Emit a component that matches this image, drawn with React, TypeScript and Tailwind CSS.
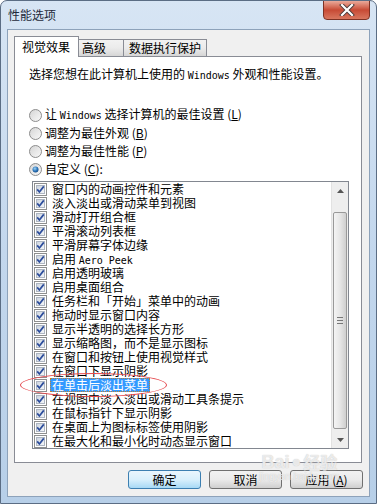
import React from 'react'

const items = [
  '窗口内的动画控件和元素',
  '淡入淡出或滑动菜单到视图',
  '滑动打开组合框',
  '平滑滚动列表框',
  '平滑屏幕字体边缘',
  '启用 |Aero Peek',
  '启用透明玻璃',
  '启用桌面组合',
  '任务栏和「开始」菜单中的动画',
  '拖动时显示窗口内容',
  '显示半透明的选择长方形',
  '显示缩略图，而不是显示图标',
  '在窗口和按钮上使用视觉样式',
  '在窗口下显示阴影',
  '在单击后淡出菜单',
  '在视图中淡入淡出或滑动工具条提示',
  '在鼠标指针下显示阴影',
  '在桌面上为图标标签使用阴影',
  '在最大化和最小化时动态显示窗口',
]

const font = "font-['Noto_Sans_CJK_SC',sans-serif]"
const mono = "font-['DejaVu_Sans_Mono',monospace] text-[10px]"

function Check() {
  return (
    <svg width="13" height="13" viewBox="0 0 13 13" className="shrink-0">
      <defs>
        <linearGradient id="cbg" x1="0" y1="0" x2="1" y2="1">
          <stop offset="0" stopColor="#cbd3de" />
          <stop offset="1" stopColor="#f6f8fa" />
        </linearGradient>
      </defs>
      <rect x="0.5" y="0.5" width="12" height="12" fill="#fff" stroke="#8e8f8f" />
      <rect x="2.5" y="2.5" width="8" height="8" fill="url(#cbg)" stroke="#aeb6c2" />
      <path d="M3.2 6.4 L5.4 9 L9.8 3.4" fill="none" stroke="#2c4d9c" strokeWidth="1.7" />
    </svg>
  )
}

function Radio({ on }: { on?: boolean }) {
  return (
    <svg width="13" height="13" viewBox="0 0 13 13" className="shrink-0">
      <defs>
        <linearGradient id="rbg" x1="0" y1="0" x2="1" y2="1">
          <stop offset="0" stopColor="#d4d4d4" />
          <stop offset="1" stopColor="#fafafa" />
        </linearGradient>
        <radialGradient id="rdot" cx="0.4" cy="0.35" r="0.7">
          <stop offset="0" stopColor="#9ed4f7" />
          <stop offset="0.6" stopColor="#2c74b8" />
          <stop offset="1" stopColor="#134a85" />
        </radialGradient>
      </defs>
      <circle cx="6.5" cy="6.5" r="6" fill="url(#rbg)" stroke="#8d8d8d" />
      {on && <circle cx="6.5" cy="6.5" r="3" fill="url(#rdot)" />}
    </svg>
  )
}

function Label({ text }: { text: string }) {
  const [a, b] = text.split('|')
  return (
    <>
      {a}
      {b && <span className={mono}>{b}</span>}
    </>
  )
}

function Btn({ label, primary }: { label: React.ReactNode; primary?: boolean }) {
  return (
    <div
      className={`w-[73px] h-[19px] rounded-[3px] border flex items-center justify-center text-[12px] leading-[14px] text-black ${
        primary
          ? 'border-[#3c7fb1] bg-gradient-to-b from-[#eaf6fd] via-[#d9f0fc] to-[#a7d9f5]'
          : 'border-[#707070] bg-gradient-to-b from-[#f2f2f2] via-[#ebebeb] to-[#cfcfcf]'
      }`}
    >
      {label}
    </div>
  )
}

export default function App() {
  return (
    <div className={`${font} relative w-[377px] h-[504px] flex flex-col border border-[#5b6d84] rounded-t-[7px] bg-gradient-to-b from-[#d7e5f4] via-[#c3d7ed] to-[#b7cfe8] overflow-hidden`}>
      {/* title bar */}
      <div className="h-[28px] flex items-start justify-between">
        <span className="ml-[7px] mt-[6px] text-[12px] leading-[16px] text-[#1e2a3a]">性能选项</span>
        <div className="mr-[6px] -mt-px w-[47px] h-[20px] rounded-b-[4px] border border-[#7d3225] bg-gradient-to-b from-[#e9a99a] via-[#c74a35] to-[#d8765f] flex items-center justify-center">
          <svg width="16" height="12" viewBox="0 0 16 12">
            <path d="M3 1 L13 11 M13 1 L3 11" stroke="#4a3a3a" strokeWidth="4" strokeLinecap="square" />
            <path d="M3 1 L13 11 M13 1 L3 11" stroke="#ffffff" strokeWidth="2.2" strokeLinecap="square" />
          </svg>
        </div>
      </div>

      {/* client area */}
      <div className="mx-[6px] mb-[6px] flex-1 border border-[#8da2ba] bg-[#f0f0f0] flex flex-col">
        {/* tabs */}
        <div className="mt-[6px] pl-[6px] h-[20px] flex items-end text-[12px] leading-[14px] text-black">
          <div className="relative z-10 w-[65px] h-[21px] -mb-px border border-b-0 border-[#898c95] bg-white pl-[7px] pt-[3px]">视觉效果</div>
          <div className="-ml-px w-[46px] h-[17px] border border-b-0 border-[#898c95] bg-gradient-to-b from-[#f2f2f2] via-[#ebebeb] to-[#d6d6d6] pl-[3px] pt-[1px]">高级</div>
          <div className="-ml-px w-[84px] h-[17px] border border-b-0 border-[#898c95] bg-gradient-to-b from-[#f2f2f2] via-[#ebebeb] to-[#d6d6d6] pl-[5px] pt-[1px]">数据执行保护</div>
        </div>

        {/* panel */}
        <div className="ml-[6px] mr-[7px] h-[407px] border border-[#898c95] bg-white pl-[14px] pt-[10px] text-[12px] leading-[14px] text-black">
          <div>
            选择您想在此计算机上使用的 <span className={mono}>Windows</span> 外观和性能设置。
          </div>

          <div className="mt-[23px] flex flex-col">
            <div className="h-[18px] flex items-center gap-[3px]">
              <Radio />
              <span>
                让 <span className={mono}>Windows</span> 选择计算机的最佳设置 (<u>L</u>)
              </span>
            </div>
            <div className="h-[18px] flex items-center gap-[3px]">
              <Radio />
              <span>调整为最佳外观 (<u>B</u>)</span>
            </div>
            <div className="h-[18px] flex items-center gap-[3px]">
              <Radio />
              <span>调整为最佳性能 (<u>P</u>)</span>
            </div>
            <div className="h-[18px] flex items-center gap-[3px]">
              <Radio on />
              <span>自定义 (<u>C</u>):</span>
            </div>
          </div>

          {/* list */}
          <div className="mt-[3px] ml-[3px] w-[317px] h-[268px] border border-[#828790] bg-white flex">
            <div className="flex-1 overflow-hidden flex flex-col">
              {items.map((t, i) => (
                <div key={i} className="h-[14px] shrink-0 flex items-center pl-[1px]">
                  <Check />
                  <span
                    className={`ml-[3px] px-[2px] h-[14px] whitespace-nowrap ${
                      i === 14 ? 'bg-[#3399ff] text-white outline outline-1 outline-dotted outline-[#c08030] -outline-offset-1' : ''
                    }`}
                  >
                    <Label text={t} />
                  </span>
                </div>
              ))}
            </div>

            {/* scrollbar */}
            <div className="w-[17px] bg-[#eeeeee] border-l border-[#e2e2e2] flex flex-col">
              <div className="h-[17px] flex items-center justify-center">
                <svg width="7" height="4" viewBox="0 0 7 4">
                  <path d="M0 4 L3.5 0 L7 4 Z" fill="#555" />
                </svg>
              </div>
              <div className="flex-1 flex flex-col pt-[13px] pb-[2px]">
                <div className="flex-1 mx-[1px] rounded-[2px] border border-[#999] bg-gradient-to-r from-[#f4f4f4] via-[#e6e6e6] to-[#cfcfcf] flex items-center justify-center">
                  <div className="flex flex-col gap-[2px]">
                    <div className="w-[6px] h-px bg-[#777]" />
                    <div className="w-[6px] h-px bg-[#777]" />
                    <div className="w-[6px] h-px bg-[#777]" />
                  </div>
                </div>
              </div>
              <div className="h-[17px] flex items-center justify-center">
                <svg width="7" height="4" viewBox="0 0 7 4">
                  <path d="M0 0 L3.5 4 L7 0 Z" fill="#555" />
                </svg>
              </div>
            </div>
          </div>
        </div>

        {/* buttons */}
        <div className="mt-[7px] pr-[6px] flex justify-end gap-[8px]">
          <Btn label="确定" primary />
          <Btn label="取消" />
          <Btn label={<span>应用 (<u>A</u>)</span>} />
        </div>
      </div>

      {/* red annotation ellipse */}
      <div className="absolute left-[19px] top-[372px] w-[147px] h-[24px] rounded-[50%] border-[1.5px] border-[#e5484d]" />

      {/* watermark */}
      <div className="absolute left-[258px] top-[452px] flex flex-col items-center text-white/70 pointer-events-none">
        <div className="flex items-end gap-[2px] font-['Liberation_Sans',sans-serif] font-bold text-[18px] leading-[18px] [text-shadow:0_0_1px_#b8b8b8]">
          <span>Bai</span>
          <span className="text-[16px]">●</span>
          <span className={`${font} text-[17px]`}>经验</span>
        </div>
        <div className="font-['Liberation_Sans',sans-serif] text-[10px] leading-[12px] [text-shadow:0_0_1px_#b8b8b8]">jingyan.baidu.com</div>
      </div>
    </div>
  )
}
